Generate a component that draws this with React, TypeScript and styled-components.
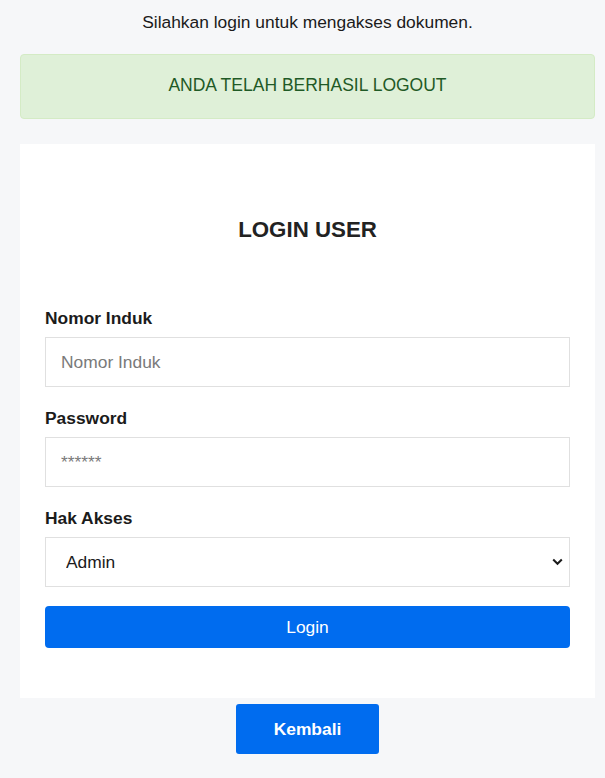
import { createGlobalStyle } from 'styled-components'
import styled from 'styled-components'

const GlobalStyle = createGlobalStyle`
  html, body {
    margin: 0;
    background: #f6f7f9;
    font-family: "Liberation Sans", Arial, sans-serif;
    color: #1b1b1b;
  }
`

const Page = styled.div`
  margin: 0 10px 0 20px;
  padding-top: 12px;
  padding-bottom: 24px;
  display: flex;
  flex-direction: column;
  align-items: center;
`

const Intro = styled.p`
  margin: 0 0 22px;
  font-size: 17.4px;
  line-height: 20px;
  text-align: center;
`

const Alert = styled.div`
  box-sizing: border-box;
  align-self: stretch;
  height: 65px;
  padding: 20px 0 22px;
  border: 1px solid #d4ebc5;
  border-radius: 4px;
  background: #dff0d8;
  color: #1f5a26;
  font-size: 17.5px;
  line-height: 21px;
  text-align: center;
  margin-bottom: 25px;
`

const Card = styled.form`
  box-sizing: border-box;
  align-self: stretch;
  background: #fff;
  padding: 73px 25px 50px;
  display: flex;
  flex-direction: column;
`

const Title = styled.h2`
  margin: 0 0 65px;
  font-size: 22.3px;
  line-height: 26px;
  font-weight: bold;
  text-align: center;
  color: #222;
`

const Field = styled.div<{ $last?: boolean }>`
  display: flex;
  flex-direction: column;
  margin-bottom: ${(p) => (p.$last ? '19px' : '21px')};
`

const Label = styled.label`
  font-size: 17.4px;
  line-height: 20px;
  font-weight: bold;
  margin-bottom: 9px;
`

const Input = styled.input`
  box-sizing: border-box;
  height: 50px;
  padding: 0 15px;
  border: 1px solid #e0e0e0;
  border-radius: 0;
  background: #fff;
  font-family: inherit;
  font-size: 17.4px;
  color: #222;
  outline: none;

  &::placeholder {
    color: #7a7a7a;
  }
`

const SelectWrap = styled.div`
  position: relative;
  display: flex;
  flex-direction: column;
`

const Select = styled.select`
  box-sizing: border-box;
  height: 50px;
  padding: 0 40px 0 20px;
  border: 1px solid #e0e0e0;
  border-radius: 0;
  background: #fff;
  font-family: inherit;
  font-size: 17.4px;
  color: #1b1b1b;
  outline: none;
  appearance: none;
`

const Chevron = styled.svg`
  position: absolute;
  right: 7px;
  top: 50%;
  margin-top: -4px;
  width: 11px;
  height: 8px;
  pointer-events: none;
`

const Button = styled.button<{ $bold?: boolean }>`
  box-sizing: border-box;
  border: none;
  background: #006cef;
  color: #fff;
  font-family: inherit;
  font-size: 17.4px;
  font-weight: ${(p) => (p.$bold ? 'bold' : 'normal')};
  cursor: pointer;
`

const LoginButton = styled(Button)`
  height: 42px;
  border-radius: 4px;
`

const BackButton = styled(Button)`
  margin-top: 6px;
  width: 143px;
  height: 50px;
  border-radius: 3px;
`

export default function App() {
  return (
    <>
      <GlobalStyle />
      <Page>
        <Intro>Silahkan login untuk mengakses dokumen.</Intro>
        <Alert>ANDA TELAH BERHASIL LOGOUT</Alert>
        <Card onSubmit={(e) => e.preventDefault()}>
          <Title>LOGIN USER</Title>
          <Field>
            <Label htmlFor="nomor">Nomor Induk</Label>
            <Input id="nomor" type="text" placeholder="Nomor Induk" />
          </Field>
          <Field>
            <Label htmlFor="password">Password</Label>
            <Input id="password" type="password" placeholder="******" />
          </Field>
          <Field $last>
            <Label htmlFor="akses">Hak Akses</Label>
            <SelectWrap>
              <Select id="akses" defaultValue="admin">
                <option value="admin">Admin</option>
                <option value="user">User</option>
              </Select>
              <Chevron viewBox="0 0 11 8">
                <path d="M1.2 1.5 L5.5 5.8 L9.8 1.5" fill="none" stroke="#1b1b1b" strokeWidth="2" />
              </Chevron>
            </SelectWrap>
          </Field>
          <LoginButton type="submit">Login</LoginButton>
        </Card>
        <BackButton $bold type="button">Kembali</BackButton>
      </Page>
    </>
  )
}
